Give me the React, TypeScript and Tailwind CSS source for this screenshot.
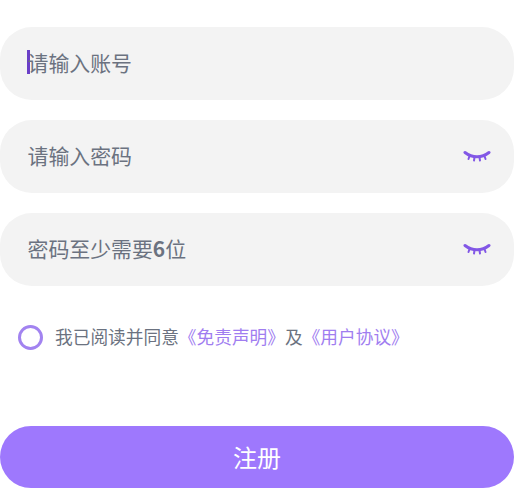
import type { ReactNode } from "react";

const font = "font-['Noto_Sans_CJK_SC','Noto_Sans',sans-serif]";

function ClosedEye() {
  return (
    <svg width="28" height="14" viewBox="0 0 28 14" fill="none" stroke="#8257e6" strokeLinecap="round" className="shrink-0">
      <path d="M2 2.5C6 5.6 10 6.8 14 6.8C18 6.8 22 5.6 26 2.5" strokeWidth="3" />
      <path d="M6.5 6L5.5 9M11.5 7.5L11 10.5M16.5 7.5L17 10.5M21.5 6L22.5 9" strokeWidth="2" />
    </svg>
  );
}

function Field({ placeholder, eye, cursor }: { placeholder: ReactNode; eye?: boolean; cursor?: boolean }) {
  return (
    <div className="relative flex h-[73px] items-center justify-between rounded-[32px] bg-[#f3f3f3] pl-[27.5px] pr-[23px]">
      {cursor && <span className="absolute left-[27px] top-[23px] h-[24px] w-[3px] bg-[#6a3fc8]" />}
      <span className="-translate-y-[1.5px] text-[20.9px] leading-none text-[#6b7280]">{placeholder}</span>
      {eye && <ClosedEye />}
    </div>
  );
}

export default function App() {
  return (
    <div className={`flex h-[501px] w-[514px] flex-col bg-white pt-[27px] ${font}`}>
      <div className="flex flex-col gap-[20px]">
        <Field placeholder="请输入账号" cursor />
        <Field placeholder="请输入密码" eye />
        <Field placeholder={<>密码至少需要<span className="font-semibold">6</span>位</>} eye />
      </div>

      <div className="mt-[38px] flex items-center pl-[18px]">
        <span className="h-[25px] w-[25px] rounded-full border-[3px] border-[#a283f0]" />
        <p className="ml-[12px] -translate-y-[1px] text-[17.7px] leading-[26px] text-[#6b7280]">
          我已阅读并同意
          <span className="text-[#a07df0]">《免责声明》</span>
          及
          <span className="text-[#a07df0]">《用户协议》</span>
        </p>
      </div>

      <button className="mt-[76px] flex h-[62px] w-full items-center justify-center rounded-[32px] bg-[#9e78fd] text-[24px] leading-none text-white">
        注册
      </button>
    </div>
  );
}
